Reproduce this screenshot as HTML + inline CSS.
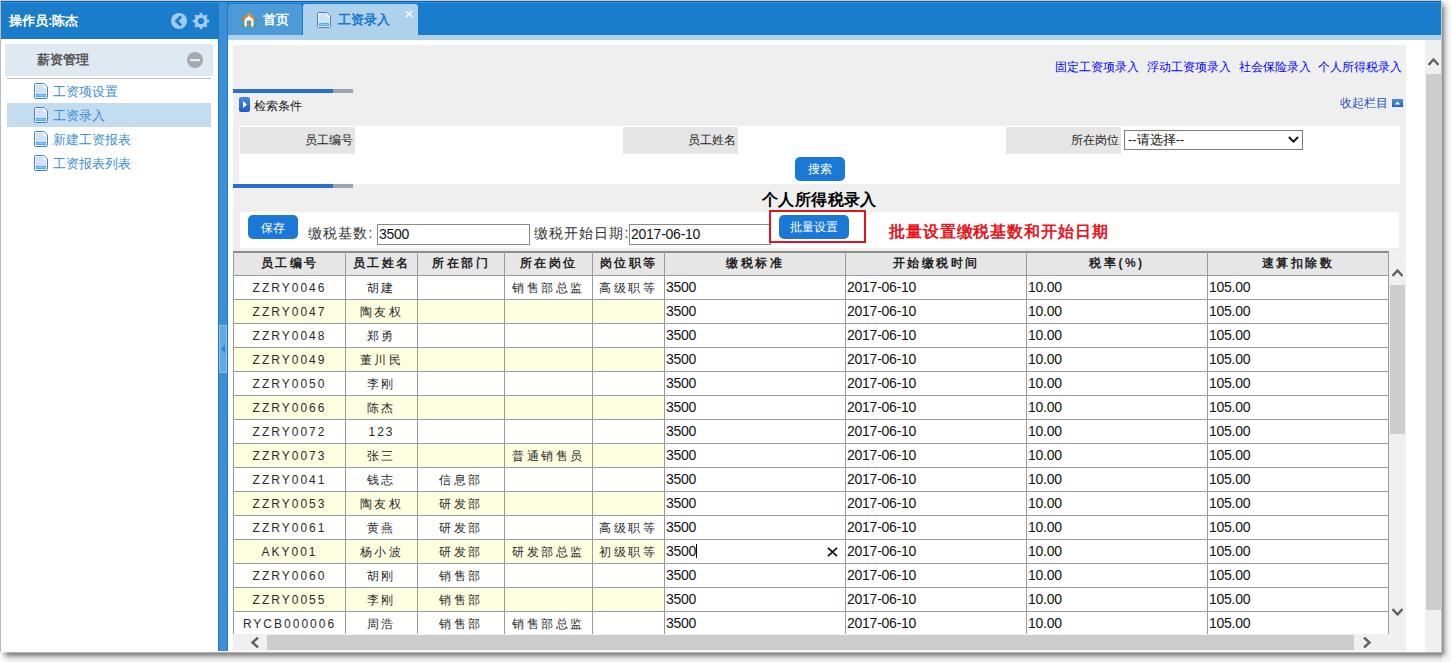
<!DOCTYPE html>
<html><head><meta charset="utf-8"><title>工资录入</title><style>
*{box-sizing:border-box}
html,body{margin:0;padding:0;background:#fff;width:1451px;height:662px;overflow:hidden;font-family:"Liberation Sans",sans-serif}
.a{position:absolute}
#frame{left:0;top:0;width:1442px;height:652px;border-top:1px solid #d2cbc4;border-left:1px solid #bfbbb7;background:#fff}
#shr{left:1442px;top:0;width:9px;height:652px;background:linear-gradient(to right,#8a8a8a 0,#a6a6a6 1.5px,#c6c6c6 3px,#e2e2e2 5px,#f2f2f2 7px,#f6f6f6 9px);-webkit-mask-image:linear-gradient(to bottom,transparent 0,#000 9px)}
#shb{left:0;top:652px;width:1442px;height:10px;background:linear-gradient(to bottom,#c8c8c8 0,#8a8a8a 1.5px,#a0a0a0 3px,#c8c8c8 5px,#e4e4e4 7px,#f0f0f0 10px);-webkit-mask-image:linear-gradient(to right,transparent 0,#000 9px)}
#shc{left:1442px;top:652px;width:9px;height:10px;background:radial-gradient(circle at 0 0,#8a8a8a 0,#a6a6a6 1.5px,#c6c6c6 3px,#e2e2e2 5px,#f2f2f2 7px,#f6f6f6 9px)}
.t{white-space:nowrap;line-height:1}
</style></head><body>
<div id="frame" class="a"></div><div id="shr" class="a"></div><div id="shb" class="a"></div><div id="shc" class="a"></div>
<div class="a" style="left:1px;top:1px;width:1441px;height:38px;background:#1a7dcb"></div>
<div class="a" style="left:1px;top:1px;width:1441px;height:1px;background:#0b5eac"></div>
<div class="a" style="left:1px;top:2px;width:1441px;height:1px;background:#2596ea"></div>
<div class="a" style="left:1px;top:39px;width:217px;height:612px;background:#fff"></div>
<div class="a" style="left:218px;top:3px;width:10px;height:648px;background:#3d8fd4;border-left:1px solid #1a7acb;border-right:1px solid #1a7acb"></div>
<div class="a" style="left:219px;top:325px;width:8px;height:48px;background:#66a8e0;border:1px solid #8cc0ea"></div>
<div class="a" style="left:221px;top:345px;width:0;height:0;border-top:4px solid transparent;border-bottom:4px solid transparent;border-right:4px solid #2f84d0"></div>
<div class="a t" style="left:9px;top:14px;font-size:13px;font-weight:bold;color:#fff">操作员:陈杰</div>
<svg class="a" style="left:170px;top:12px" width="18" height="18" viewBox="0 0 18 18"><circle cx="9" cy="9" r="8" fill="#9fcbee"/><path d="M11 4.4 L6.6 9 L11 13.6" stroke="#1a7dcb" stroke-width="2.9" fill="none"/></svg>
<svg class="a" style="left:192px;top:12px" width="18" height="18" viewBox="0 0 18 18"><g fill="#9fcbee"><circle cx="9" cy="9" r="6.6"/><rect x="7.8" y="0.7" width="2.4" height="3.5" rx="0.6" transform="rotate(0 9 9)"/><rect x="7.8" y="0.7" width="2.4" height="3.5" rx="0.6" transform="rotate(45 9 9)"/><rect x="7.8" y="0.7" width="2.4" height="3.5" rx="0.6" transform="rotate(90 9 9)"/><rect x="7.8" y="0.7" width="2.4" height="3.5" rx="0.6" transform="rotate(135 9 9)"/><rect x="7.8" y="0.7" width="2.4" height="3.5" rx="0.6" transform="rotate(180 9 9)"/><rect x="7.8" y="0.7" width="2.4" height="3.5" rx="0.6" transform="rotate(225 9 9)"/><rect x="7.8" y="0.7" width="2.4" height="3.5" rx="0.6" transform="rotate(270 9 9)"/><rect x="7.8" y="0.7" width="2.4" height="3.5" rx="0.6" transform="rotate(315 9 9)"/></g><circle cx="9" cy="9" r="3.1" fill="#1a7dcb"/></svg>
<div class="a" style="left:5px;top:44px;width:208px;height:32px;background:#dfe9f2"></div>
<div class="a t" style="left:37px;top:53px;font-size:13px;font-weight:bold;color:#555">薪资管理</div>
<svg class="a" style="left:187px;top:52px" width="16" height="16" viewBox="0 0 16 16"><circle cx="8" cy="8" r="8" fill="#a4a9ad"/><rect x="3" y="7" width="10" height="2.2" fill="#e8f0f6"/></svg>
<div class="a" style="left:7px;top:78px;width:204px;height:1px;background:#bdbdbd"></div>
<div class="a" style="left:7px;top:103px;width:204px;height:24px;background:#c3dcf0"></div>
<svg class="a" style="left:34px;top:83px" width="14" height="16" viewBox="0 0 14 16"><path d="M0.5 1.8 Q0.5 0.5 1.8 0.5 L10 0.5 L13.5 4 L13.5 14.2 Q13.5 15.5 12.2 15.5 L1.8 15.5 Q0.5 15.5 0.5 14.2 Z" fill="#fff" stroke="#4a7fcb" stroke-width="1"/><path d="M1.6 1.6 L9.3 1.6 L12.4 4.7 L12.4 14.4 L1.6 14.4 Z" fill="#cfe2f9"/><path d="M9.3 1.6 L9.3 4.7 L12.4 4.7 Z" fill="#fff"/><rect x="2" y="11" width="10" height="3" fill="#52acf2"/><rect x="3" y="12" width="8" height="1" fill="#8ccaf8"/></svg>
<div class="a t" style="left:53px;top:85px;font-size:13px;color:#3b8ed8">工资项设置</div>
<svg class="a" style="left:34px;top:107px" width="14" height="16" viewBox="0 0 14 16"><path d="M0.5 1.8 Q0.5 0.5 1.8 0.5 L10 0.5 L13.5 4 L13.5 14.2 Q13.5 15.5 12.2 15.5 L1.8 15.5 Q0.5 15.5 0.5 14.2 Z" fill="#fff" stroke="#4a7fcb" stroke-width="1"/><path d="M1.6 1.6 L9.3 1.6 L12.4 4.7 L12.4 14.4 L1.6 14.4 Z" fill="#cfe2f9"/><path d="M9.3 1.6 L9.3 4.7 L12.4 4.7 Z" fill="#fff"/><rect x="2" y="11" width="10" height="3" fill="#52acf2"/><rect x="3" y="12" width="8" height="1" fill="#8ccaf8"/></svg>
<div class="a t" style="left:53px;top:109px;font-size:13px;color:#3b8ed8">工资录入</div>
<svg class="a" style="left:34px;top:131px" width="14" height="16" viewBox="0 0 14 16"><path d="M0.5 1.8 Q0.5 0.5 1.8 0.5 L10 0.5 L13.5 4 L13.5 14.2 Q13.5 15.5 12.2 15.5 L1.8 15.5 Q0.5 15.5 0.5 14.2 Z" fill="#fff" stroke="#4a7fcb" stroke-width="1"/><path d="M1.6 1.6 L9.3 1.6 L12.4 4.7 L12.4 14.4 L1.6 14.4 Z" fill="#cfe2f9"/><path d="M9.3 1.6 L9.3 4.7 L12.4 4.7 Z" fill="#fff"/><rect x="2" y="11" width="10" height="3" fill="#52acf2"/><rect x="3" y="12" width="8" height="1" fill="#8ccaf8"/></svg>
<div class="a t" style="left:53px;top:133px;font-size:13px;color:#3b8ed8">新建工资报表</div>
<svg class="a" style="left:34px;top:155px" width="14" height="16" viewBox="0 0 14 16"><path d="M0.5 1.8 Q0.5 0.5 1.8 0.5 L10 0.5 L13.5 4 L13.5 14.2 Q13.5 15.5 12.2 15.5 L1.8 15.5 Q0.5 15.5 0.5 14.2 Z" fill="#fff" stroke="#4a7fcb" stroke-width="1"/><path d="M1.6 1.6 L9.3 1.6 L12.4 4.7 L12.4 14.4 L1.6 14.4 Z" fill="#cfe2f9"/><path d="M9.3 1.6 L9.3 4.7 L12.4 4.7 Z" fill="#fff"/><rect x="2" y="11" width="10" height="3" fill="#52acf2"/><rect x="3" y="12" width="8" height="1" fill="#8ccaf8"/></svg>
<div class="a t" style="left:53px;top:157px;font-size:13px;color:#3b8ed8">工资报表列表</div>
<div class="a" style="left:228px;top:4px;width:74px;height:31px;background:#4c9bd8;border-radius:3px 3px 0 0"></div>
<div class="a" style="left:303px;top:4px;width:115px;height:36px;background:#afd2ec;border-radius:3px 3px 0 0"></div>
<div class="a" style="left:228px;top:35px;width:1214px;height:5px;background:#afd2ec"></div>
<svg class="a" style="left:241px;top:12px" width="16" height="16" viewBox="0 0 16 16"><defs><linearGradient id="rf" x1="0" y1="0" x2="0" y2="1"><stop offset="0" stop-color="#e8b060"/><stop offset="1" stop-color="#c27a30"/></linearGradient></defs><ellipse cx="2.8" cy="13.6" rx="2.8" ry="1.6" fill="#4fa83e"/><ellipse cx="13.2" cy="13.6" rx="2.8" ry="1.6" fill="#4fa83e"/><path d="M3.5 6.5 L8 3 L12.5 6.5 L12.5 14.5 L3.5 14.5 Z" fill="#f6f6f6"/><rect x="6.2" y="9" width="3.6" height="5.5" fill="#8c8c8c" stroke="#6a6a6a" stroke-width="0.6"/><path d="M0 7.6 L8 0.6 L16 7.6 L14.6 8.8 L8 3.6 L1.4 8.8 Z" fill="url(#rf)" stroke="#a86a2a" stroke-width="0.5"/></svg>
<div class="a t" style="left:263px;top:13px;font-size:13px;font-weight:bold;color:#fff">首页</div>
<svg class="a" style="left:317px;top:12px" width="14" height="16" viewBox="0 0 14 16"><path d="M0.5 1.8 Q0.5 0.5 1.8 0.5 L10 0.5 L13.5 4 L13.5 14.2 Q13.5 15.5 12.2 15.5 L1.8 15.5 Q0.5 15.5 0.5 14.2 Z" fill="#fff" stroke="#4a7fcb" stroke-width="1"/><path d="M1.6 1.6 L9.3 1.6 L12.4 4.7 L12.4 14.4 L1.6 14.4 Z" fill="#cfe2f9"/><path d="M9.3 1.6 L9.3 4.7 L12.4 4.7 Z" fill="#fff"/><rect x="2" y="11" width="10" height="3" fill="#52acf2"/><rect x="3" y="12" width="8" height="1" fill="#8ccaf8"/></svg>
<div class="a t" style="left:338px;top:13px;font-size:13px;font-weight:bold;color:#1a78c8">工资录入</div>
<svg class="a" style="left:405px;top:10px" width="8" height="8" viewBox="0 0 8 8"><path d="M1 1 L7 7 M7 1 L1 7" stroke="#fff" stroke-width="1.4"/></svg>
<div class="a" style="left:228px;top:40px;width:1214px;height:612px;background:#fff"></div>
<div class="a" style="left:233px;top:45px;width:1173px;height:606px;background:#efefef"></div>
<div class="a" style="left:1425px;top:40px;width:17px;height:612px;background:#f0f0f0"></div>
<svg class="a" style="left:1428px;top:57px" width="11" height="9" viewBox="0 0 11 9"><path d="M0.5 8 L5.5 2.5 L10.5 8" stroke="#606060" stroke-width="2.4" fill="none"/></svg>
<div class="a" style="left:1426px;top:74px;width:16px;height:536px;background:#cdcdcd"></div>
<div class="a" style="left:1441px;top:0;width:1px;height:652px;background:#cfc9c3"></div>
<div class="a t" style="left:1055px;top:61px;font-size:12px;color:#0000ff">固定工资项录入</div>
<div class="a t" style="left:1147px;top:61px;font-size:12px;color:#0000ff">浮动工资项录入</div>
<div class="a t" style="left:1239px;top:61px;font-size:12px;color:#0000ff">社会保险录入</div>
<div class="a t" style="left:1318px;top:61px;font-size:12px;color:#0000ff">个人所得税录入</div>
<div class="a" style="left:233px;top:89px;width:100px;height:4px;background:#2a6fcc"></div>
<div class="a" style="left:333px;top:89px;width:20px;height:4px;background:#9aa4b4"></div>
<div class="a" style="left:233px;top:184px;width:100px;height:4px;background:#2a6fcc"></div>
<div class="a" style="left:333px;top:184px;width:20px;height:4px;background:#9aa4b4"></div>
<svg class="a" style="left:239px;top:97px" width="11" height="15" viewBox="0 0 11 15"><defs><linearGradient id="bg1" x1="0" y1="0" x2="0" y2="1"><stop offset="0" stop-color="#3f8ce0"/><stop offset="1" stop-color="#1d5ec0"/></linearGradient></defs><rect x="0" y="0" width="11" height="15" rx="2" fill="url(#bg1)"/><path d="M4 4 L8 7.5 L4 11 Z" fill="#fff"/></svg>
<div class="a t" style="left:254px;top:100px;font-size:12px;color:#222">检索条件</div>
<div class="a t" style="left:1340px;top:97px;font-size:12px;color:#1a55b0">收起栏目</div>
<svg class="a" style="left:1392px;top:99px" width="11" height="8" viewBox="0 0 11 8"><defs><linearGradient id="bg2" x1="0" y1="0" x2="0" y2="1"><stop offset="0" stop-color="#4a90dc"/><stop offset="1" stop-color="#2262c0"/></linearGradient></defs><rect width="11" height="8" fill="url(#bg2)"/><path d="M2.5 5.5 L5.5 2.5 L8.5 5.5 Z" fill="#fff"/></svg>
<div class="a" style="left:239px;top:126px;width:1161px;height:58px;background:#fff"></div>
<div class="a" style="left:240px;top:127px;width:115px;height:27px;background:#e5e5e5"></div>
<div class="a t" style="left:240px;top:134px;width:113px;text-align:right;font-size:12px;color:#222">员工编号</div>
<div class="a" style="left:623px;top:127px;width:115px;height:27px;background:#e5e5e5"></div>
<div class="a t" style="left:623px;top:134px;width:113px;text-align:right;font-size:12px;color:#222">员工姓名</div>
<div class="a" style="left:1006px;top:127px;width:115px;height:27px;background:#e5e5e5"></div>
<div class="a t" style="left:1006px;top:134px;width:113px;text-align:right;font-size:12px;color:#222">所在岗位</div>
<div class="a" style="left:1124px;top:130px;width:179px;height:20px;border:1px solid #7a7a7a;background:#fff"></div>
<div class="a t" style="left:1128px;top:133px;font-size:13px;color:#111">--请选择--</div>
<svg class="a" style="left:1288px;top:136px" width="11" height="7" viewBox="0 0 11 7"><path d="M0.9 1 L5.5 5.6 L10.1 1" stroke="#111" stroke-width="2" fill="none"/></svg>
<div class="a t" style="left:795px;top:157px;width:50px;height:24px;border-radius:5px;background:#1a78d6;color:#fff;font-size:12px;text-align:center;padding-top:6px">搜索</div>
<div class="a t" style="left:762px;top:192px;font-size:16px;font-weight:bold;letter-spacing:0.4px;color:#000">个人所得税录入</div>
<div class="a" style="left:240px;top:212px;width:1159px;height:36px;background:#fff"></div>
<div class="a t" style="left:248px;top:215px;width:50px;height:24px;border-radius:5px;background:#1a78d6;color:#fff;font-size:12px;text-align:center;padding-top:7px">保存</div>
<div class="a t" style="left:308px;top:226px;font-size:14px;letter-spacing:1.1px;color:#333">缴税基数:</div>
<div class="a" style="left:377px;top:224px;width:153px;height:21px;border:1px solid #8a8a8a;background:#fff"></div>
<div class="a t" style="left:379px;top:227px;font-size:14px;letter-spacing:-0.25px;color:#111">3500</div>
<div class="a t" style="left:534px;top:226px;font-size:14px;letter-spacing:1.1px;color:#333">缴税开始日期:</div>
<div class="a" style="left:629px;top:224px;width:142px;height:21px;border:1px solid #8a8a8a;background:#fff"></div>
<div class="a t" style="left:631px;top:227px;font-size:14px;letter-spacing:-0.25px;color:#111">2017-06-10</div>
<div class="a" style="left:769px;top:210px;width:97px;height:33px;border:2px solid #e0141c"></div>
<div class="a t" style="left:779px;top:215px;width:70px;height:24px;border-radius:5px;background:#1a78d6;color:#fff;font-size:12px;text-align:center;padding-top:6px">批量设置</div>
<div class="a t" style="left:889px;top:224px;font-size:16px;font-weight:bold;letter-spacing:0.9px;color:#e8141c">批量设置缴税基数和开始日期</div>
<div class="a" style="left:233px;top:251px;width:1156px;height:383px;background:#fff"></div>
<div class="a" style="left:233px;top:253px;width:1155px;height:22px;background:#e6e6e6"></div>
<div class="a" style="left:234px;top:300px;width:430px;height:23px;background:#fefee0"></div>
<div class="a" style="left:234px;top:348px;width:430px;height:23px;background:#fefee0"></div>
<div class="a" style="left:234px;top:396px;width:430px;height:23px;background:#fefee0"></div>
<div class="a" style="left:234px;top:444px;width:430px;height:23px;background:#fefee0"></div>
<div class="a" style="left:234px;top:492px;width:430px;height:23px;background:#fefee0"></div>
<div class="a" style="left:234px;top:540px;width:430px;height:23px;background:#fefee0"></div>
<div class="a" style="left:234px;top:588px;width:430px;height:23px;background:#fefee0"></div>
<div class="a" style="left:233px;top:251px;width:1156px;height:2px;background:#8c8c8c"></div>
<div class="a" style="left:233px;top:275px;width:1156px;height:1px;background:#9a9a9a"></div>
<div class="a" style="left:233px;top:299px;width:1156px;height:1px;background:#9a9a9a"></div>
<div class="a" style="left:233px;top:323px;width:1156px;height:1px;background:#9a9a9a"></div>
<div class="a" style="left:233px;top:347px;width:1156px;height:1px;background:#9a9a9a"></div>
<div class="a" style="left:233px;top:371px;width:1156px;height:1px;background:#9a9a9a"></div>
<div class="a" style="left:233px;top:395px;width:1156px;height:1px;background:#9a9a9a"></div>
<div class="a" style="left:233px;top:419px;width:1156px;height:1px;background:#9a9a9a"></div>
<div class="a" style="left:233px;top:443px;width:1156px;height:1px;background:#9a9a9a"></div>
<div class="a" style="left:233px;top:467px;width:1156px;height:1px;background:#9a9a9a"></div>
<div class="a" style="left:233px;top:491px;width:1156px;height:1px;background:#9a9a9a"></div>
<div class="a" style="left:233px;top:515px;width:1156px;height:1px;background:#9a9a9a"></div>
<div class="a" style="left:233px;top:539px;width:1156px;height:1px;background:#9a9a9a"></div>
<div class="a" style="left:233px;top:563px;width:1156px;height:1px;background:#9a9a9a"></div>
<div class="a" style="left:233px;top:587px;width:1156px;height:1px;background:#9a9a9a"></div>
<div class="a" style="left:233px;top:611px;width:1156px;height:1px;background:#9a9a9a"></div>
<div class="a" style="left:233px;top:251px;width:1px;height:383px;background:#9a9a9a"></div>
<div class="a" style="left:345px;top:251px;width:1px;height:383px;background:#9a9a9a"></div>
<div class="a" style="left:417px;top:251px;width:1px;height:383px;background:#9a9a9a"></div>
<div class="a" style="left:504px;top:251px;width:1px;height:383px;background:#9a9a9a"></div>
<div class="a" style="left:592px;top:251px;width:1px;height:383px;background:#9a9a9a"></div>
<div class="a" style="left:664px;top:251px;width:1px;height:383px;background:#9a9a9a"></div>
<div class="a" style="left:845px;top:251px;width:1px;height:383px;background:#9a9a9a"></div>
<div class="a" style="left:1026px;top:251px;width:1px;height:383px;background:#9a9a9a"></div>
<div class="a" style="left:1207px;top:251px;width:1px;height:383px;background:#9a9a9a"></div>
<div class="a" style="left:1388px;top:251px;width:1px;height:383px;background:#9a9a9a"></div>
<div class="a t" style="left:234px;top:257px;width:111px;text-align:center;font-size:12px;font-weight:bold;color:#222;letter-spacing:2.5px">员工编号</div>
<div class="a t" style="left:346px;top:257px;width:71px;text-align:center;font-size:12px;font-weight:bold;color:#222;letter-spacing:2.5px">员工姓名</div>
<div class="a t" style="left:418px;top:257px;width:86px;text-align:center;font-size:12px;font-weight:bold;color:#222;letter-spacing:2.5px">所在部门</div>
<div class="a t" style="left:505px;top:257px;width:87px;text-align:center;font-size:12px;font-weight:bold;color:#222;letter-spacing:2.5px">所在岗位</div>
<div class="a t" style="left:593px;top:257px;width:71px;text-align:center;font-size:12px;font-weight:bold;color:#222;letter-spacing:2.5px">岗位职等</div>
<div class="a t" style="left:665px;top:257px;width:180px;text-align:center;font-size:12px;font-weight:bold;color:#222;letter-spacing:2.5px">缴税标准</div>
<div class="a t" style="left:846px;top:257px;width:180px;text-align:center;font-size:12px;font-weight:bold;color:#222;letter-spacing:2.5px">开始缴税时间</div>
<div class="a t" style="left:1027px;top:257px;width:180px;text-align:center;font-size:12px;font-weight:bold;color:#222;letter-spacing:2.5px">税率(%)</div>
<div class="a t" style="left:1208px;top:257px;width:180px;text-align:center;font-size:12px;font-weight:bold;color:#222;letter-spacing:2.5px">速算扣除数</div>
<div class="a t" style="left:234px;top:282px;width:111px;text-align:center;font-size:12px;color:#2a2a2a;letter-spacing:2px">ZZRY0046</div>
<div class="a t" style="left:346px;top:282px;width:71px;text-align:center;font-size:12px;color:#2a2a2a;letter-spacing:2.6px">胡建</div>
<div class="a t" style="left:505px;top:282px;width:87px;text-align:center;font-size:12px;color:#2a2a2a;letter-spacing:2.6px">销售部总监</div>
<div class="a t" style="left:593px;top:282px;width:71px;text-align:center;font-size:12px;color:#2a2a2a;letter-spacing:2.6px">高级职等</div>
<div class="a t" style="left:666px;top:280px;font-size:14px;letter-spacing:-0.25px;color:#111">3500</div>
<div class="a t" style="left:847px;top:280px;font-size:14px;letter-spacing:-0.25px;color:#111">2017-06-10</div>
<div class="a t" style="left:1028px;top:280px;font-size:14px;letter-spacing:-0.25px;color:#111">10.00</div>
<div class="a t" style="left:1209px;top:280px;font-size:14px;letter-spacing:-0.25px;color:#111">105.00</div>
<div class="a t" style="left:234px;top:306px;width:111px;text-align:center;font-size:12px;color:#2a2a2a;letter-spacing:2px">ZZRY0047</div>
<div class="a t" style="left:346px;top:306px;width:71px;text-align:center;font-size:12px;color:#2a2a2a;letter-spacing:2.6px">陶友权</div>
<div class="a t" style="left:666px;top:304px;font-size:14px;letter-spacing:-0.25px;color:#111">3500</div>
<div class="a t" style="left:847px;top:304px;font-size:14px;letter-spacing:-0.25px;color:#111">2017-06-10</div>
<div class="a t" style="left:1028px;top:304px;font-size:14px;letter-spacing:-0.25px;color:#111">10.00</div>
<div class="a t" style="left:1209px;top:304px;font-size:14px;letter-spacing:-0.25px;color:#111">105.00</div>
<div class="a t" style="left:234px;top:330px;width:111px;text-align:center;font-size:12px;color:#2a2a2a;letter-spacing:2px">ZZRY0048</div>
<div class="a t" style="left:346px;top:330px;width:71px;text-align:center;font-size:12px;color:#2a2a2a;letter-spacing:2.6px">郑勇</div>
<div class="a t" style="left:666px;top:328px;font-size:14px;letter-spacing:-0.25px;color:#111">3500</div>
<div class="a t" style="left:847px;top:328px;font-size:14px;letter-spacing:-0.25px;color:#111">2017-06-10</div>
<div class="a t" style="left:1028px;top:328px;font-size:14px;letter-spacing:-0.25px;color:#111">10.00</div>
<div class="a t" style="left:1209px;top:328px;font-size:14px;letter-spacing:-0.25px;color:#111">105.00</div>
<div class="a t" style="left:234px;top:354px;width:111px;text-align:center;font-size:12px;color:#2a2a2a;letter-spacing:2px">ZZRY0049</div>
<div class="a t" style="left:346px;top:354px;width:71px;text-align:center;font-size:12px;color:#2a2a2a;letter-spacing:2.6px">董川民</div>
<div class="a t" style="left:666px;top:352px;font-size:14px;letter-spacing:-0.25px;color:#111">3500</div>
<div class="a t" style="left:847px;top:352px;font-size:14px;letter-spacing:-0.25px;color:#111">2017-06-10</div>
<div class="a t" style="left:1028px;top:352px;font-size:14px;letter-spacing:-0.25px;color:#111">10.00</div>
<div class="a t" style="left:1209px;top:352px;font-size:14px;letter-spacing:-0.25px;color:#111">105.00</div>
<div class="a t" style="left:234px;top:378px;width:111px;text-align:center;font-size:12px;color:#2a2a2a;letter-spacing:2px">ZZRY0050</div>
<div class="a t" style="left:346px;top:378px;width:71px;text-align:center;font-size:12px;color:#2a2a2a;letter-spacing:2.6px">李刚</div>
<div class="a t" style="left:666px;top:376px;font-size:14px;letter-spacing:-0.25px;color:#111">3500</div>
<div class="a t" style="left:847px;top:376px;font-size:14px;letter-spacing:-0.25px;color:#111">2017-06-10</div>
<div class="a t" style="left:1028px;top:376px;font-size:14px;letter-spacing:-0.25px;color:#111">10.00</div>
<div class="a t" style="left:1209px;top:376px;font-size:14px;letter-spacing:-0.25px;color:#111">105.00</div>
<div class="a t" style="left:234px;top:402px;width:111px;text-align:center;font-size:12px;color:#2a2a2a;letter-spacing:2px">ZZRY0066</div>
<div class="a t" style="left:346px;top:402px;width:71px;text-align:center;font-size:12px;color:#2a2a2a;letter-spacing:2.6px">陈杰</div>
<div class="a t" style="left:666px;top:400px;font-size:14px;letter-spacing:-0.25px;color:#111">3500</div>
<div class="a t" style="left:847px;top:400px;font-size:14px;letter-spacing:-0.25px;color:#111">2017-06-10</div>
<div class="a t" style="left:1028px;top:400px;font-size:14px;letter-spacing:-0.25px;color:#111">10.00</div>
<div class="a t" style="left:1209px;top:400px;font-size:14px;letter-spacing:-0.25px;color:#111">105.00</div>
<div class="a t" style="left:234px;top:426px;width:111px;text-align:center;font-size:12px;color:#2a2a2a;letter-spacing:2px">ZZRY0072</div>
<div class="a t" style="left:346px;top:426px;width:71px;text-align:center;font-size:12px;color:#2a2a2a;letter-spacing:2px">123</div>
<div class="a t" style="left:666px;top:424px;font-size:14px;letter-spacing:-0.25px;color:#111">3500</div>
<div class="a t" style="left:847px;top:424px;font-size:14px;letter-spacing:-0.25px;color:#111">2017-06-10</div>
<div class="a t" style="left:1028px;top:424px;font-size:14px;letter-spacing:-0.25px;color:#111">10.00</div>
<div class="a t" style="left:1209px;top:424px;font-size:14px;letter-spacing:-0.25px;color:#111">105.00</div>
<div class="a t" style="left:234px;top:450px;width:111px;text-align:center;font-size:12px;color:#2a2a2a;letter-spacing:2px">ZZRY0073</div>
<div class="a t" style="left:346px;top:450px;width:71px;text-align:center;font-size:12px;color:#2a2a2a;letter-spacing:2.6px">张三</div>
<div class="a t" style="left:505px;top:450px;width:87px;text-align:center;font-size:12px;color:#2a2a2a;letter-spacing:2.6px">普通销售员</div>
<div class="a t" style="left:666px;top:448px;font-size:14px;letter-spacing:-0.25px;color:#111">3500</div>
<div class="a t" style="left:847px;top:448px;font-size:14px;letter-spacing:-0.25px;color:#111">2017-06-10</div>
<div class="a t" style="left:1028px;top:448px;font-size:14px;letter-spacing:-0.25px;color:#111">10.00</div>
<div class="a t" style="left:1209px;top:448px;font-size:14px;letter-spacing:-0.25px;color:#111">105.00</div>
<div class="a t" style="left:234px;top:474px;width:111px;text-align:center;font-size:12px;color:#2a2a2a;letter-spacing:2px">ZZRY0041</div>
<div class="a t" style="left:346px;top:474px;width:71px;text-align:center;font-size:12px;color:#2a2a2a;letter-spacing:2.6px">钱志</div>
<div class="a t" style="left:418px;top:474px;width:86px;text-align:center;font-size:12px;color:#2a2a2a;letter-spacing:2.6px">信息部</div>
<div class="a t" style="left:666px;top:472px;font-size:14px;letter-spacing:-0.25px;color:#111">3500</div>
<div class="a t" style="left:847px;top:472px;font-size:14px;letter-spacing:-0.25px;color:#111">2017-06-10</div>
<div class="a t" style="left:1028px;top:472px;font-size:14px;letter-spacing:-0.25px;color:#111">10.00</div>
<div class="a t" style="left:1209px;top:472px;font-size:14px;letter-spacing:-0.25px;color:#111">105.00</div>
<div class="a t" style="left:234px;top:498px;width:111px;text-align:center;font-size:12px;color:#2a2a2a;letter-spacing:2px">ZZRY0053</div>
<div class="a t" style="left:346px;top:498px;width:71px;text-align:center;font-size:12px;color:#2a2a2a;letter-spacing:2.6px">陶友权</div>
<div class="a t" style="left:418px;top:498px;width:86px;text-align:center;font-size:12px;color:#2a2a2a;letter-spacing:2.6px">研发部</div>
<div class="a t" style="left:666px;top:496px;font-size:14px;letter-spacing:-0.25px;color:#111">3500</div>
<div class="a t" style="left:847px;top:496px;font-size:14px;letter-spacing:-0.25px;color:#111">2017-06-10</div>
<div class="a t" style="left:1028px;top:496px;font-size:14px;letter-spacing:-0.25px;color:#111">10.00</div>
<div class="a t" style="left:1209px;top:496px;font-size:14px;letter-spacing:-0.25px;color:#111">105.00</div>
<div class="a t" style="left:234px;top:522px;width:111px;text-align:center;font-size:12px;color:#2a2a2a;letter-spacing:2px">ZZRY0061</div>
<div class="a t" style="left:346px;top:522px;width:71px;text-align:center;font-size:12px;color:#2a2a2a;letter-spacing:2.6px">黄燕</div>
<div class="a t" style="left:418px;top:522px;width:86px;text-align:center;font-size:12px;color:#2a2a2a;letter-spacing:2.6px">研发部</div>
<div class="a t" style="left:593px;top:522px;width:71px;text-align:center;font-size:12px;color:#2a2a2a;letter-spacing:2.6px">高级职等</div>
<div class="a t" style="left:666px;top:520px;font-size:14px;letter-spacing:-0.25px;color:#111">3500</div>
<div class="a t" style="left:847px;top:520px;font-size:14px;letter-spacing:-0.25px;color:#111">2017-06-10</div>
<div class="a t" style="left:1028px;top:520px;font-size:14px;letter-spacing:-0.25px;color:#111">10.00</div>
<div class="a t" style="left:1209px;top:520px;font-size:14px;letter-spacing:-0.25px;color:#111">105.00</div>
<div class="a t" style="left:234px;top:546px;width:111px;text-align:center;font-size:12px;color:#2a2a2a;letter-spacing:2px">AKY001</div>
<div class="a t" style="left:346px;top:546px;width:71px;text-align:center;font-size:12px;color:#2a2a2a;letter-spacing:2.6px">杨小波</div>
<div class="a t" style="left:418px;top:546px;width:86px;text-align:center;font-size:12px;color:#2a2a2a;letter-spacing:2.6px">研发部</div>
<div class="a t" style="left:505px;top:546px;width:87px;text-align:center;font-size:12px;color:#2a2a2a;letter-spacing:2.6px">研发部总监</div>
<div class="a t" style="left:593px;top:546px;width:71px;text-align:center;font-size:12px;color:#2a2a2a;letter-spacing:2.6px">初级职等</div>
<div class="a t" style="left:666px;top:544px;font-size:14px;letter-spacing:-0.25px;color:#111">3500</div>
<div class="a t" style="left:847px;top:544px;font-size:14px;letter-spacing:-0.25px;color:#111">2017-06-10</div>
<div class="a t" style="left:1028px;top:544px;font-size:14px;letter-spacing:-0.25px;color:#111">10.00</div>
<div class="a t" style="left:1209px;top:544px;font-size:14px;letter-spacing:-0.25px;color:#111">105.00</div>
<div class="a t" style="left:234px;top:570px;width:111px;text-align:center;font-size:12px;color:#2a2a2a;letter-spacing:2px">ZZRY0060</div>
<div class="a t" style="left:346px;top:570px;width:71px;text-align:center;font-size:12px;color:#2a2a2a;letter-spacing:2.6px">胡刚</div>
<div class="a t" style="left:418px;top:570px;width:86px;text-align:center;font-size:12px;color:#2a2a2a;letter-spacing:2.6px">销售部</div>
<div class="a t" style="left:666px;top:568px;font-size:14px;letter-spacing:-0.25px;color:#111">3500</div>
<div class="a t" style="left:847px;top:568px;font-size:14px;letter-spacing:-0.25px;color:#111">2017-06-10</div>
<div class="a t" style="left:1028px;top:568px;font-size:14px;letter-spacing:-0.25px;color:#111">10.00</div>
<div class="a t" style="left:1209px;top:568px;font-size:14px;letter-spacing:-0.25px;color:#111">105.00</div>
<div class="a t" style="left:234px;top:594px;width:111px;text-align:center;font-size:12px;color:#2a2a2a;letter-spacing:2px">ZZRY0055</div>
<div class="a t" style="left:346px;top:594px;width:71px;text-align:center;font-size:12px;color:#2a2a2a;letter-spacing:2.6px">李刚</div>
<div class="a t" style="left:418px;top:594px;width:86px;text-align:center;font-size:12px;color:#2a2a2a;letter-spacing:2.6px">销售部</div>
<div class="a t" style="left:666px;top:592px;font-size:14px;letter-spacing:-0.25px;color:#111">3500</div>
<div class="a t" style="left:847px;top:592px;font-size:14px;letter-spacing:-0.25px;color:#111">2017-06-10</div>
<div class="a t" style="left:1028px;top:592px;font-size:14px;letter-spacing:-0.25px;color:#111">10.00</div>
<div class="a t" style="left:1209px;top:592px;font-size:14px;letter-spacing:-0.25px;color:#111">105.00</div>
<div class="a t" style="left:234px;top:618px;width:111px;text-align:center;font-size:12px;color:#2a2a2a;letter-spacing:2px">RYCB000006</div>
<div class="a t" style="left:346px;top:618px;width:71px;text-align:center;font-size:12px;color:#2a2a2a;letter-spacing:2.6px">周浩</div>
<div class="a t" style="left:418px;top:618px;width:86px;text-align:center;font-size:12px;color:#2a2a2a;letter-spacing:2.6px">销售部</div>
<div class="a t" style="left:505px;top:618px;width:87px;text-align:center;font-size:12px;color:#2a2a2a;letter-spacing:2.6px">销售部总监</div>
<div class="a t" style="left:666px;top:616px;font-size:14px;letter-spacing:-0.25px;color:#111">3500</div>
<div class="a t" style="left:847px;top:616px;font-size:14px;letter-spacing:-0.25px;color:#111">2017-06-10</div>
<div class="a t" style="left:1028px;top:616px;font-size:14px;letter-spacing:-0.25px;color:#111">10.00</div>
<div class="a t" style="left:1209px;top:616px;font-size:14px;letter-spacing:-0.25px;color:#111">105.00</div>
<div class="a" style="left:696px;top:544px;width:1px;height:14px;background:#000"></div>
<svg class="a" style="left:827px;top:547px" width="11" height="10" viewBox="0 0 11 10"><path d="M1 0.8 L10 9.2 M10 0.8 L1 9.2" stroke="#111" stroke-width="1.7"/></svg>
<div class="a" style="left:1389px;top:251px;width:17px;height:400px;background:#f0f0f0"></div>
<svg class="a" style="left:1392px;top:268px" width="11" height="9" viewBox="0 0 11 9"><path d="M0.5 8 L5.5 2.5 L10.5 8" stroke="#606060" stroke-width="2.4" fill="none"/></svg>
<div class="a" style="left:1390px;top:285px;width:15px;height:149px;background:#cdcdcd"></div>
<svg class="a" style="left:1392px;top:608px" width="11" height="9" viewBox="0 0 11 9"><path d="M0.5 1 L5.5 6.5 L10.5 1" stroke="#606060" stroke-width="2.4" fill="none"/></svg>
<div class="a" style="left:233px;top:634px;width:1156px;height:17px;background:#f0f0f0"></div>
<svg class="a" style="left:250px;top:637px" width="9" height="11" viewBox="0 0 9 11"><path d="M8 0.5 L2.5 5.5 L8 10.5" stroke="#606060" stroke-width="2.4" fill="none"/></svg>
<div class="a" style="left:267px;top:635px;width:1087px;height:15px;background:#cdcdcd"></div>
<svg class="a" style="left:1363px;top:637px" width="9" height="11" viewBox="0 0 9 11"><path d="M1 0.5 L6.5 5.5 L1 10.5" stroke="#606060" stroke-width="2.4" fill="none"/></svg>
</body></html>
